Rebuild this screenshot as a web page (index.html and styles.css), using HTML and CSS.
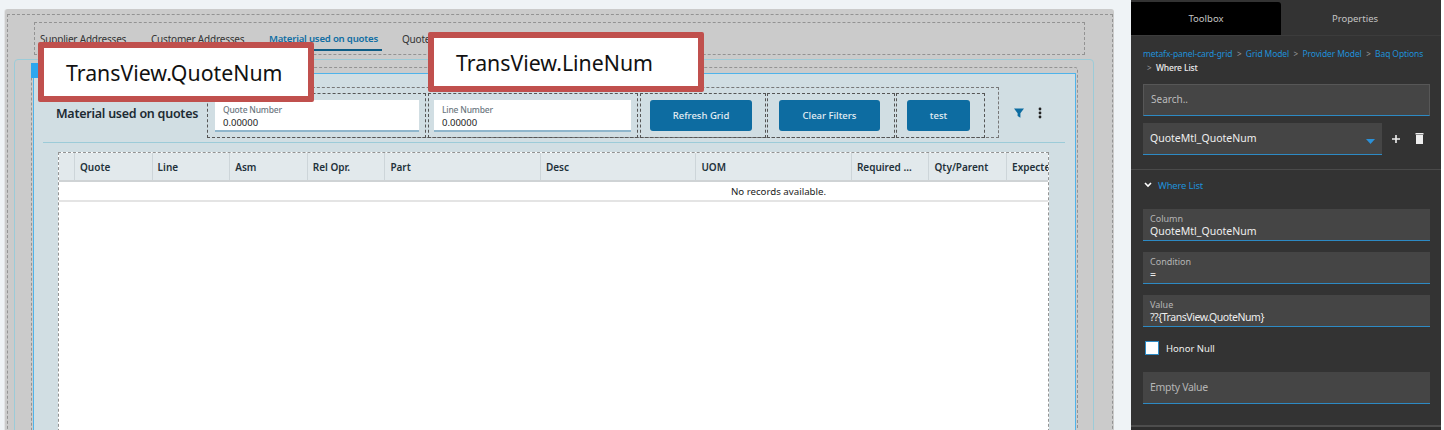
FILE: index.html
```html
<!DOCTYPE html>
<html lang="en">
<head>
<meta charset="utf-8">
<title>Where List</title>
<link rel="stylesheet" href="styles.css">
</head>
<body>
<main class="designer">
  <div class="canvas">
    <div class="canvas-dash">
      <nav class="tabs">
        <span class="tab t1">Supplier Addresses</span>
        <span class="tab t2">Customer Addresses</span>
        <span class="tab active">Material used on quotes</span>
        <span class="tab">Quote</span>
      </nav>
      <section class="card">
        <div class="card-dash">
          <div class="selected">
            <header class="toolbar">
              <h2 class="title">Material used on quotes</h2>
              <div class="tools">
                <div class="slot slot-a"><div class="input"><label>Quote Number</label><span>0.00000</span></div></div>
                <div class="slot slot-b"><div class="input"><label>Line Number</label><span>0.00000</span></div></div>
                <div class="slot slot-c"><button class="btn refresh">Refresh Grid</button></div>
                <div class="slot slot-d"><button class="btn clear">Clear Filters</button></div>
                <div class="slot slot-e"><button class="btn test">test</button></div>
              </div>
              <svg class="filter" width="12" height="12" viewBox="0 0 12 12"><path d="M1 1.500h10L7.400 6.200v4.600L4.600 9V6.200z"/></svg>
              <svg class="kebab" width="4" height="12" viewBox="0 0 4 12"><circle cx="2" cy="2" r="1.400"/><circle cx="2" cy="6" r="1.400"/><circle cx="2" cy="10" r="1.400"/></svg>
            </header>
            <div class="divider"></div>
            <div class="grid">
              <div class="grid-head">
                <div class="col c0"></div>
                <div class="col">Quote</div>
                <div class="col">Line</div>
                <div class="col">Asm</div>
                <div class="col">Rel Opr.</div>
                <div class="col wide">Part</div>
                <div class="col wide">Desc</div>
                <div class="col wide">UOM</div>
                <div class="col">Required ...</div>
                <div class="col">Qty/Parent</div>
                <div class="col last">Expected</div>
              </div>
              <div class="no-records">No records available.</div>
              <div class="grid-body"></div>
            </div>
          </div>
        </div>
      </section>
    </div>
  </div>
  <span class="handle"></span>
  <div class="callout callout-quote">TransView.QuoteNum</div>
  <div class="callout callout-line">TransView.LineNum</div>
</main>
<aside class="panel">
  <div class="panel-tabs">
    <div class="ptab on">Toolbox</div>
    <div class="ptab props">Properties</div>
  </div>
  <div class="crumbs">
    <a>metafx-panel-card-grid</a><i>&gt;</i><a>Grid Model</a><i>&gt;</i><a>Provider Model</a><i>&gt;</i><a>Baq Options</a>
    <div class="crumb-last"><i>&gt;</i><b>Where List</b></div>
  </div>
  <div class="search">Search..</div>
  <div class="picker">
    <div class="select">QuoteMtl_QuoteNum<svg class="caret" width="9" height="5" viewBox="0 0 9 5"><path d="M0 0h9L4.500 5z"/></svg></div>
    <svg class="ico plus" width="10" height="10" viewBox="0 0 10 10"><path d="M4.200 1h1.600v3.200H9v1.600H5.800V9H4.200V5.800H1V4.200h3.200z"/></svg>
    <svg class="ico trash" width="9" height="11" viewBox="0 0 9 11"><path d="M.5 0h8v1.400h-8zM1 2h7v9H1z"/></svg>
  </div>
  <div class="section">
    <div class="section-head">
      <svg width="8" height="6" viewBox="0 0 8 6"><path d="M1 1l3 3 3-3" fill="none" stroke="#fff" stroke-width="1.600"/></svg>
      <span>Where List</span>
    </div>
    <div class="field"><label>Column</label><span>QuoteMtl_QuoteNum</span></div>
    <div class="field"><label>Condition</label><span>=</span></div>
    <div class="field"><label>Value</label><span class="tight">??{TransView.QuoteNum}</span></div>
    <div class="check"><span class="box"></span>Honor Null</div>
    <div class="field empty">Empty Value</div>
  </div>
  <div class="panel-end"></div>
</aside>
</body>
</html>
```
FILE: styles.css
```css
* { box-sizing: border-box; }
html, body { margin: 0; height: 430px; overflow: hidden; }
body {
  display: flex;
  background: #fff;
  font-family: "Noto Sans", "Open Sans", sans-serif;
  color: #222;
}
.designer {
  position: relative;
  width: 1131px;
  height: 430px;
  flex: none;
  padding: 9px 0 0 5px;
  background: #eff3f6;
  overflow: hidden;
}
.canvas {
  width: 1109px;
  height: 440px;
  padding: 5px 1px 0 2px;
  background: #cbcbcb;
  border-radius: 3px 3px 0 0;
  box-shadow: -1px 0 0 #e2e4e6;
}
.canvas-dash {
  height: 440px;
  padding: 7px 27px 0 26px;
  border: 1px dashed #939393;
}
.tabs {
  display: flex;
  align-items: flex-start;
  height: 33px;
  padding: 9px 0 0 5px;
  border: 1px dashed #939393;
  font-size: 10px;
  letter-spacing: -0.2px;
  line-height: 14px;
}
.tab { color: #333; padding-bottom: 3px; white-space: nowrap; }
.t1 { width: 111px; }
.t2 { width: 118px; }
.tab.active {
  color: #0f6ea3;
  font-size: 9.600px;
  font-weight: 600;
  border-bottom: 2px solid #0d5c85;
  padding: 0 5px 3px 0;
  width: 113px;
  margin-right: 20px;
}
.card {
  margin: 4px 0 0 -20px;
  width: 1080px;
  height: 400px;
  padding: 7px 15px 0 16px;
  border: 1px solid #9ccbd8;
  border-radius: 4px 4px 0 0;
}
.card-dash {
  height: 400px;
  padding: 5px 1px 0;
  border: 1px dashed #939393;
  border-radius: 3px 3px 0 0;
}
.selected {
  height: 400px;
  padding-top: 13px;
  background: #d1dee3;
  border: 1px solid #4fb3ea;
}
.toolbar {
  display: flex;
  align-items: flex-start;
  height: 52px;
  padding-left: 22px;
}
.title {
  width: 151px;
  flex: none;
  margin: 18px 0 0;
  font-size: 12.500px;
  letter-spacing: -0.25px;
  line-height: 18px;
  font-weight: 600;
  color: #1d2b33;
  white-space: nowrap;
}
.tools {
  display: flex;
  gap: 2px;
  width: 792px;
  height: 51px;
  flex: none;
  padding-top: 5px;
  border: 1px dashed #777;
  border-left: 0;
}
.slot {
  height: 45px;
  border: 1px dashed #555;
  flex: none;
}
.slot-a { width: 219px; padding: 6px 6px 0 7px; }
.slot-b { width: 210px; padding: 6px 6px 0 5px; }
.slot-c { width: 126px; padding: 6px 0 0 9px; }
.slot-d { width: 128px; margin-left: -1px; padding: 6px 0 0 11px; }
.slot-e { width: 89px; margin-left: -1px; padding: 6px 0 0 10px; }
.input {
  height: 32px;
  padding: 4px 8px 0;
  background: #fff;
  border-bottom: 2px solid #8fb6cc;
  font-size: 9.500px;
  line-height: 12px;
}
.input label { display: block; font-size: 8.500px; letter-spacing: -0.2px; font-weight: 500; color: #6c7780; }
.input span { display: block; margin-top: 1px; color: #222; }
.btn {
  display: block;
  height: 31px;
  padding: 0;
  border: 0;
  border-radius: 3px;
  background: #0d6ca1;
  color: #e4eef4;
  font: 500 9.500px/31px "Noto Sans", sans-serif;
}
.refresh { width: 102px; }
.clear { width: 101px; }
.test { width: 63px; }
.filter { flex: none; margin: 20px 0 0 14px; fill: #0d6ca1; }
.kebab { flex: none; margin: 20px 0 0 13px; fill: #222; }
.divider {
  height: 1px;
  margin: 3px 10px 0 9px;
  background: #9ccbd8;
}
.grid {
  margin: 9px 26px 0 24px;
  height: 300px;
  border: 1px dashed #939393;
  border-bottom: 0;
  background: #fff;
}
.grid-head {
  display: flex;
  height: 29px;
  background: #e2e9ec;
  border-bottom: 2px solid #cfd3d5;
  overflow: hidden;
}
.col {
  width: 77.600px;
  flex: none;
  padding-left: 5px;
  border-left: 1px solid #cdd5d9;
  font-size: 10px;
  font-weight: 600;
  line-height: 28px;
  color: #22313a;
  white-space: nowrap;
}
.c0 { width: 15px; padding: 0; border-left: 0; }
.wide { width: 155.500px; }
.last { width: 60px; }
.no-records {
  height: 19px;
  padding-left: 450px;
  text-align: center;
  font-size: 9.700px;
  line-height: 19px;
  color: #222;
  border-bottom: 1px solid #e4e4e4;
  box-shadow: 0 1px 0 #e4e4e4;
}
.handle {
  position: absolute;
  left: 31px;
  top: 63px;
  width: 8px;
  height: 15px;
  background: #2fa6ee;
}
.callout {
  position: absolute;
  width: 276px;
  height: 60px;
  padding: 0 0 0 22px;
  background: #fff;
  border: 6px solid #c0504d;
  border-radius: 2px;
  font-size: 21.300px;
  line-height: 50px;
  color: #111;
  white-space: nowrap;
}
.callout-quote { left: 38px; top: 42px; }
.callout-line { left: 428px; top: 32px; }
.panel {
  width: 310px;
  height: 430px;
  flex: none;
  background: #333;
  color: #ddd;
  font-size: 10px;
  overflow: hidden;
}
.panel-tabs {
  display: flex;
  height: 36px;
  padding-top: 2px;
  border-bottom: 1px solid #3c3c3c;
}
.ptab {
  width: 160px;
  text-align: center;
  font-size: 9.500px;
  line-height: 33px;
  color: #c4c4c4;
}
.ptab.props { padding-right: 12px; }
.ptab.on {
  width: 150px;
  background: #000;
  border-radius: 0 3px 0 0;
}
.crumbs {
  padding: 11px 12px 0;
  font-size: 8.500px;
  letter-spacing: -0.12px;
  line-height: 14px;
  height: 48px;
  white-space: nowrap;
}
.crumbs a { color: #2090d8; }
.crumbs i { font-style: normal; color: #999; margin: 0 4.500px; font-size: 8px; }
.crumb-last b { font-weight: 500; color: #eee; }
.crumb-last i { margin-left: 4px; }
.search {
  height: 32px;
  margin: 0 11px 0 12px;
  padding-left: 7px;
  background: #454545;
  border: 1px solid #575757;
  border-bottom: 1px solid #2d8ac4;
  font-size: 10px;
  line-height: 29px;
  color: #bbb;
}
.picker {
  display: flex;
  align-items: center;
  margin: 7px 11px 0 12px;
}
.select {
  position: relative;
  width: 239px;
  height: 32px;
  padding-left: 7px;
  background: #454545;
  border-bottom: 1px solid #2d8ac4;
  font-size: 10.500px;
  line-height: 31px;
  color: #eee;
}
.caret { position: absolute; right: 7px; top: 16px; fill: #2a90d8; }
.ico { fill: #eee; flex: none; }
.plus { margin-left: 9px; margin-bottom: 1px; }
.trash { margin-left: 14px; margin-bottom: 1px; }
.section {
  margin-top: 14px;
  padding: 0 11px 0 12px;
  height: 257px;
  border-top: 1px solid #4a4a4a;
}
.section-head {
  display: flex;
  align-items: center;
  gap: 6px;
  height: 30px;
  padding-left: 1px;
  font-size: 9.500px;
  letter-spacing: -0.2px;
  color: #2090d8;
}
.field {
  height: 32px;
  margin: 9px 0 11px;
  padding: 5px 7px 0;
  background: #454545;
  border-bottom: 1px solid #2d8ac4;
  line-height: 12px;
  font-size: 10.500px;
  color: #eee;
}
.field label { display: block; font-size: 9px; line-height: 10px; color: #b5b5b5; }
.field span { display: block; margin-top: 1px; line-height: 13px; }
.field .tight { letter-spacing: -0.45px; }
.check {
  display: flex;
  align-items: center;
  gap: 7px;
  height: 14px;
  margin: 14px 0 0 2px;
  font-size: 9.500px;
  color: #eee;
}
.box {
  width: 14px;
  height: 14px;
  background: #fff;
  border: 1px solid #2d8ac4;
}
.field.empty {
  margin-top: 17px;
  padding-top: 0;
  line-height: 31px;
  letter-spacing: -0.3px;
  color: #b5b5b5;
}
.panel-end {
  height: 5px;
  margin-top: -1px;
  border-top: 2px solid #4d4d4d;
  background: #2d2d2d;
}
```
